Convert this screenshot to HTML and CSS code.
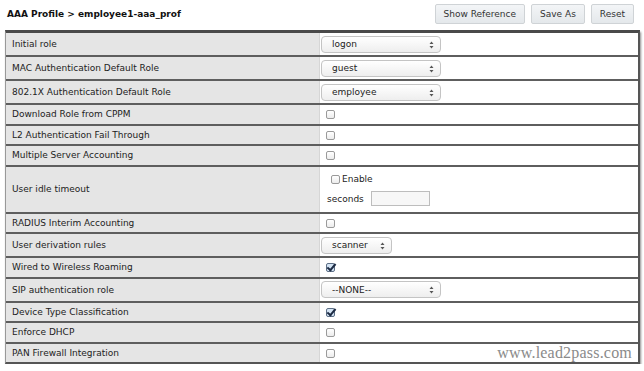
FILE: index.html
```html
<!DOCTYPE html>
<html lang="en">
<head>
  <meta charset="UTF-8">
  <title>AAA Profile - employee1-aaa_prof</title>
  <link rel="stylesheet" href="styles.css">
</head>
<body>
  <div class="page">
    <div class="toolbar">
      <h1 class="title">AAA Profile &gt; employee1-aaa_prof</h1>
      <div class="actions">
        <button class="btn">Show Reference</button>
        <button class="btn">Save As</button>
        <button class="btn">Reset</button>
      </div>
    </div>

    <div class="profile">
      <table class="profile-table">
        <tr class="r-sel">
          <td class="label">Initial role</td>
          <td class="value">
            <span class="select-wrap w-long">
              <select><option>logon</option></select>
              <svg class="arrows" width="5" height="8" viewBox="0 0 5 8"><path d="M0.5 3 L2.5 0.5 L4.5 3 Z M0.5 5 L2.5 7.5 L4.5 5 Z" fill="#555"/></svg>
            </span>
          </td>
        </tr>
        <tr class="r-sel">
          <td class="label">MAC Authentication Default Role</td>
          <td class="value">
            <span class="select-wrap w-long">
              <select><option>guest</option></select>
              <svg class="arrows" width="5" height="8" viewBox="0 0 5 8"><path d="M0.5 3 L2.5 0.5 L4.5 3 Z M0.5 5 L2.5 7.5 L4.5 5 Z" fill="#555"/></svg>
            </span>
          </td>
        </tr>
        <tr class="r-sel">
          <td class="label">802.1X Authentication Default Role</td>
          <td class="value">
            <span class="select-wrap w-long">
              <select><option>employee</option></select>
              <svg class="arrows" width="5" height="8" viewBox="0 0 5 8"><path d="M0.5 3 L2.5 0.5 L4.5 3 Z M0.5 5 L2.5 7.5 L4.5 5 Z" fill="#555"/></svg>
            </span>
          </td>
        </tr>
        <tr class="r-chk">
          <td class="label">Download Role from CPPM</td>
          <td class="value"><input type="checkbox" class="check"></td>
        </tr>
        <tr class="r-chk">
          <td class="label">L2 Authentication Fail Through</td>
          <td class="value"><input type="checkbox" class="check"></td>
        </tr>
        <tr class="r-chk">
          <td class="label">Multiple Server Accounting</td>
          <td class="value"><input type="checkbox" class="check"></td>
        </tr>
        <tr class="r-tall">
          <td class="label">User idle timeout</td>
          <td class="value">
            <div class="idle">
              <label class="enable"><input type="checkbox" class="check">Enable</label>
              <label class="seconds">seconds <input type="text" class="text-input"></label>
            </div>
          </td>
        </tr>
        <tr class="r-chk">
          <td class="label">RADIUS Interim Accounting</td>
          <td class="value"><input type="checkbox" class="check"></td>
        </tr>
        <tr class="r-sel">
          <td class="label">User derivation rules</td>
          <td class="value">
            <span class="select-wrap w-short">
              <select><option>scanner</option></select>
              <svg class="arrows" width="5" height="8" viewBox="0 0 5 8"><path d="M0.5 3 L2.5 0.5 L4.5 3 Z M0.5 5 L2.5 7.5 L4.5 5 Z" fill="#555"/></svg>
            </span>
          </td>
        </tr>
        <tr class="r-chk">
          <td class="label">Wired to Wireless Roaming</td>
          <td class="value"><input type="checkbox" class="check" checked></td>
        </tr>
        <tr class="r-sel">
          <td class="label">SIP authentication role</td>
          <td class="value">
            <span class="select-wrap w-long">
              <select><option>--NONE--</option></select>
              <svg class="arrows" width="5" height="8" viewBox="0 0 5 8"><path d="M0.5 3 L2.5 0.5 L4.5 3 Z M0.5 5 L2.5 7.5 L4.5 5 Z" fill="#555"/></svg>
            </span>
          </td>
        </tr>
        <tr class="r-chk">
          <td class="label">Device Type Classification</td>
          <td class="value"><input type="checkbox" class="check" checked></td>
        </tr>
        <tr class="r-chk">
          <td class="label">Enforce DHCP</td>
          <td class="value"><input type="checkbox" class="check"></td>
        </tr>
        <tr class="r-chk">
          <td class="label">PAN Firewall Integration</td>
          <td class="value"><input type="checkbox" class="check"></td>
        </tr>
      </table>
      <div class="watermark">www.lead2pass.com</div>
    </div>
  </div>
</body>
</html>
```

FILE: styles.css
```css
body {
  font-family: "DejaVu Sans", Verdana, sans-serif;
  margin: 0;
  padding: 0;
  background-color: #fff;
  color: #222;
}
.page {
  width: 644px;
}
.toolbar {
  display: flex;
  justify-content: space-between;
  align-items: center;
  height: 30px;
  padding: 0 10px 0 7px;
  box-sizing: border-box;
}
.title {
  font-size: 9px;
  font-weight: bold;
  margin: 0;
  padding-bottom: 3px;
  color: #111;
}
.actions {
  display: flex;
  gap: 6px;
  padding-bottom: 3px;
}
.btn {
  font-family: "DejaVu Sans", Verdana, sans-serif;
  font-size: 9px;
  color: #333;
  height: 20px;
  padding: 0 8px;
  border: 1px solid #cfd3d6;
  border-radius: 2px;
  background: linear-gradient(#f3f5f7, #e4e8eb);
}
.profile {
  position: relative;
  margin-left: 5px;
  width: 632px;
  border: 1px solid #999;
  border-top: 3px solid #4a4a4a;
  border-right: 2px solid #555;
  border-bottom: 2px solid #555;
  box-shadow: 1px 2px 2px rgba(0, 0, 0, 0.45);
}
.profile-table {
  width: 100%;
  border-collapse: collapse;
  font-size: 9px;
}
.profile-table td {
  border-top: 2px solid #5e5e5e;
  padding: 0;
}
.profile-table tr:first-child td {
  border-top: none;
}
.r-sel td {
  height: 22px;
}
.r-chk td {
  height: 18.5px;
}
.r-tall td {
  height: 45px;
}
.label {
  width: 307px;
  padding-left: 6px !important;
  background-color: #e5e5e5;
  color: #222;
}
.value {
  background-color: #fff;
  border-left: 1px solid #d6d6d6;
}
.select-wrap {
  position: relative;
  display: inline-block;
  margin-left: 1px;
  vertical-align: middle;
}
.select-wrap select {
  appearance: none;
  -webkit-appearance: none;
  font-family: "DejaVu Sans", Verdana, sans-serif;
  font-size: 9px;
  color: #222;
  width: 100%;
  height: 17px;
  padding: 0 0 0 10px;
  border: 1px solid #c4c4c4;
  border-radius: 4px;
  background: linear-gradient(#fff, #eeeeee);
}
.w-long {
  width: 120px;
}
.w-short {
  width: 71px;
}
.arrows {
  position: absolute;
  right: 7px;
  top: 5px;
}
.check {
  appearance: none;
  -webkit-appearance: none;
  position: relative;
  width: 9px;
  height: 9px;
  margin: 0 0 0 6px;
  border: 1px solid #9a9a9a;
  border-radius: 2px;
  background: linear-gradient(#fff, #ececec);
  vertical-align: middle;
}
.check:checked {
  background: #d4e4f4;
  border-color: #5d6f86;
}
.check:checked::after {
  content: "";
  position: absolute;
  left: 2px;
  top: -2px;
  width: 3px;
  height: 7px;
  border-right: 2px solid #1d2b44;
  border-bottom: 2px solid #1d2b44;
  transform: rotate(40deg);
}
.idle {
  display: flex;
  flex-direction: column;
  gap: 7px;
  padding-top: 2px;
}
.enable {
  display: flex;
  align-items: center;
  gap: 2px;
  margin-left: 5px;
  font-size: 9px;
}
.seconds {
  display: flex;
  align-items: center;
  gap: 7px;
  margin-left: 7px;
  font-size: 9px;
}
.text-input {
  width: 59px;
  height: 15px;
  padding: 0;
  border: 1px solid #bdbdbd;
  box-sizing: border-box;
  background: #f7f7f7;
}
.watermark {
  position: absolute;
  right: 6px;
  bottom: 0;
  font-family: "Liberation Serif", "Times New Roman", serif;
  font-size: 16px;
  color: #8a8a8a;
  letter-spacing: 0.2px;
}
```
